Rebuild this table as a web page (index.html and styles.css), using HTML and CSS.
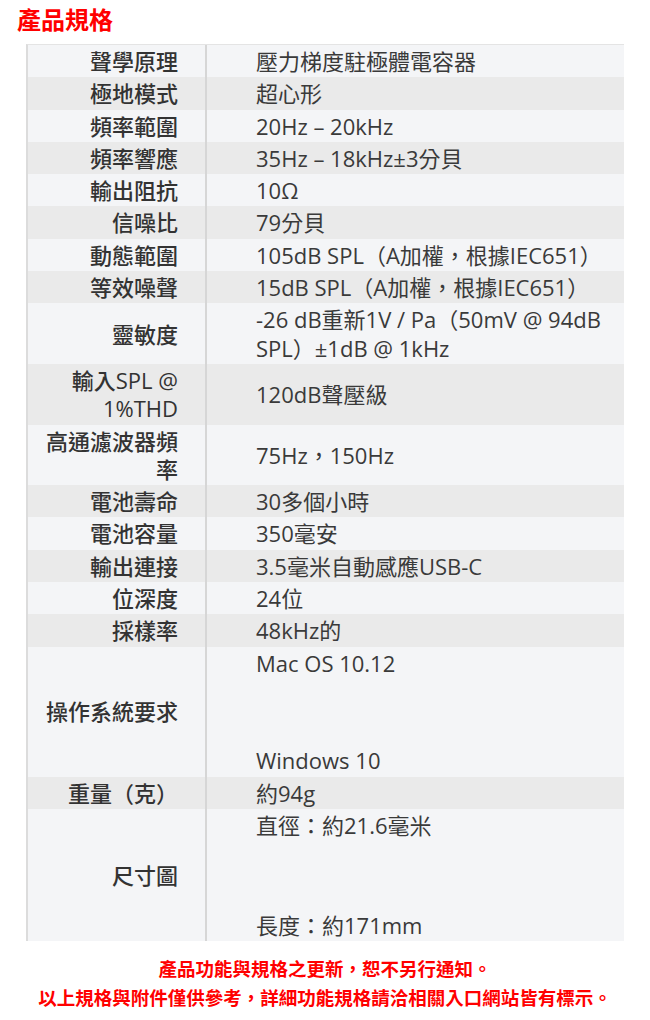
FILE: index.html
```html
<!DOCTYPE html>
<html lang="zh-Hant">
<head>
<meta charset="utf-8">
<title>產品規格</title>
<link rel="stylesheet" href="styles.css">
</head>
<body>
<h2 class="title">產品規格</h2>
<table class="spec">
  <colgroup><col class="c-label"><col class="c-value"></colgroup>
  <tbody>
    <tr><th>聲學原理</th><td>壓力梯度駐極體電容器</td></tr>
    <tr><th>極地模式</th><td>超心形</td></tr>
    <tr><th>頻率範圍</th><td>20Hz – 20kHz</td></tr>
    <tr><th>頻率響應</th><td>35Hz – 18kHz±3分貝</td></tr>
    <tr><th>輸出阻抗</th><td>10Ω</td></tr>
    <tr><th>信噪比</th><td>79分貝</td></tr>
    <tr><th>動態範圍</th><td>105dB SPL（A加權，根據IEC651）</td></tr>
    <tr><th>等效噪聲</th><td>15dB SPL（A加權，根據IEC651）</td></tr>
    <tr><th>靈敏度</th><td><span class="nw">-26 dB重新1V / Pa（50mV @ 94dB</span><br>SPL）±1dB @ 1kHz</td></tr>
    <tr><th>輸入SPL @<br>1%THD</th><td>120dB聲壓級</td></tr>
    <tr><th>高通濾波器頻<br>率</th><td>75Hz，150Hz</td></tr>
    <tr><th>電池壽命</th><td>30多個小時</td></tr>
    <tr><th>電池容量</th><td>350毫安</td></tr>
    <tr><th>輸出連接</th><td>3.5毫米自動感應USB-C</td></tr>
    <tr><th>位深度</th><td>24位</td></tr>
    <tr><th>採樣率</th><td>48kHz的</td></tr>
    <tr><th>操作系統要求</th><td><div>Mac OS 10.12</div><div class="gap gap-os"></div><div>Windows 10</div></td></tr>
    <tr><th>重量（克）</th><td>約94g</td></tr>
    <tr><th>尺寸圖</th><td><div>直徑：約21.6毫米</div><div class="gap gap-size"></div><div>長度：約171mm</div></td></tr>
  </tbody>
</table>
<div class="notice">
  <p>產品功能與規格之更新，恕不另行通知。</p>
  <p>以上規格與附件僅供參考，詳細功能規格請洽相關入口網站皆有標示。</p>
</div>
</body>
</html>
```

FILE: styles.css
```css
html, body {
  margin: 0;
  padding: 0;
  background: #ffffff;
}

body {
  width: 650px;
  font-family: "Open Sans", "Noto Sans CJK TC", sans-serif;
  color: #333333;
}

.title {
  margin: 4px 0 0 0;
  padding-left: 17px;
  font-family: "Noto Sans CJK TC", sans-serif;
  font-size: 24px;
  font-weight: 700;
  line-height: 30px;
  color: #ff0000;
}

.spec {
  margin: 10px 0 0 26px;
  width: 598px;
  table-layout: fixed;
  border-collapse: separate;
  border-spacing: 0;
  border-top: 1px solid #e4e4e4;
  border-left: 2px solid #dcdcdc;
  font-size: 22px;
  line-height: 28.3px;
}

.c-label { width: 179px; }
.c-value { width: 417px; }

.spec tr:nth-child(odd) { background: #f4f5f7; }
.spec tr:nth-child(even) { background: #eaeaea; }

.spec th {
  padding: 2px 27px 2px 0;
  text-align: right;
  font-weight: 500;
  color: #333333;
  border-right: 2px solid #d6d6d6;
  vertical-align: middle;
}

.spec td {
  padding: 2px 2px 2px 49px;
  text-align: left;
  font-weight: 400;
  color: #3a3a3a;
  vertical-align: middle;
}

.nw { white-space: nowrap; }

.gap-os { height: 69.4px; }
.gap-size { height: 71.4px; }

.notice {
  margin-top: 13px;
  text-align: center;
  font-family: "Noto Sans CJK TC", sans-serif;
  font-size: 18.5px;
  font-weight: 700;
  line-height: 29px;
  color: #ff0000;
}

.notice p {
  margin: 0;
}
```
